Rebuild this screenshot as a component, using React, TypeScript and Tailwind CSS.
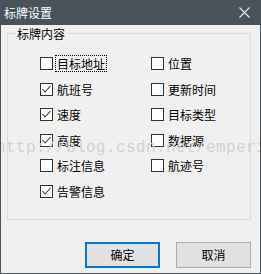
import React from "react";

const items: [string, boolean][] = [
  ["目标地址", false],
  ["位置", false],
  ["航班号", true],
  ["更新时间", false],
  ["速度", true],
  ["目标类型", false],
  ["高度", true],
  ["数据源", false],
  ["标注信息", false],
  ["航迹号", false],
  ["告警信息", true],
];

function CheckBox({ checked }: { checked: boolean }) {
  return (
    <div className="w-[13px] h-[13px] border border-[#333333] bg-white shrink-0 flex items-center justify-center">
      {checked && (
        <svg width="11" height="11" viewBox="0 0 11 11">
          <polyline points="1.5,5 4,8 9.5,2" fill="none" stroke="#333" strokeWidth="1.1" />
        </svg>
      )}
    </div>
  );
}

export default function App() {
  return (
    <div
      className="relative w-[261px] h-[274px] bg-[#f0f0f0] border-x border-b border-[#4b535a] overflow-hidden"
      style={{ fontFamily: '"Noto Sans CJK SC", "Noto Sans", sans-serif' }}
    >
      {/* title bar */}
      <div className="h-[25px] bg-[#4b535a] flex items-center justify-between pl-[3px] pr-[10px]">
        <span className="text-[12px] leading-none text-white">标牌设置</span>
        <svg width="11" height="11" viewBox="0 0 11 11">
          <path d="M0.5 0.5 L10.5 10.5 M10.5 0.5 L0.5 10.5" stroke="#e8e8e8" strokeWidth="1.1" />
        </svg>
      </div>

      {/* group box */}
      <div className="relative ml-[6px] mt-[8px] w-[244px] h-[187px] border border-[#dcdcdc]">
        <span className="absolute left-[8px] -top-[7px] px-[1px] bg-[#f0f0f0] text-[12px] leading-[14px] text-black">
          标牌内容
        </span>
        <div className="grid grid-cols-[111px_1fr] auto-rows-[25.6px] pl-[32px] pt-[23px]">
          {items.map(([label, checked], i) => (
            <div key={label} className="flex items-start gap-[3px]">
              <CheckBox checked={checked} />
              <span
                className={`text-[12px] leading-[13px] text-black px-[1px] ${
                  i === 0 ? "outline outline-1 outline-dotted outline-black -mt-[1px] py-[1px]" : ""
                }`}
              >
                {label}
              </span>
            </div>
          ))}
        </div>
      </div>

      {/* buttons */}
      <div className="flex justify-end gap-[16px] mt-[22px] pr-[9px]">
        <button className="w-[75px] h-[26px] bg-[#e1e1e1] border-2 border-[#0078d7] text-[12px] text-black">
          确定
        </button>
        <button className="w-[75px] h-[26px] bg-[#e1e1e1] border border-[#adadad] text-[12px] text-black">
          取消
        </button>
      </div>

      {/* watermark */}
      <div
        className="absolute left-[-5px] top-[138px] pointer-events-none whitespace-nowrap text-[16px] tracking-[0.4px] leading-[20px] text-[#d2d2d2]"
        style={{ fontFamily: '"Liberation Mono", monospace' }}
      >
        http://blog.csdn.net/emperinter
      </div>
    </div>
  );
}
